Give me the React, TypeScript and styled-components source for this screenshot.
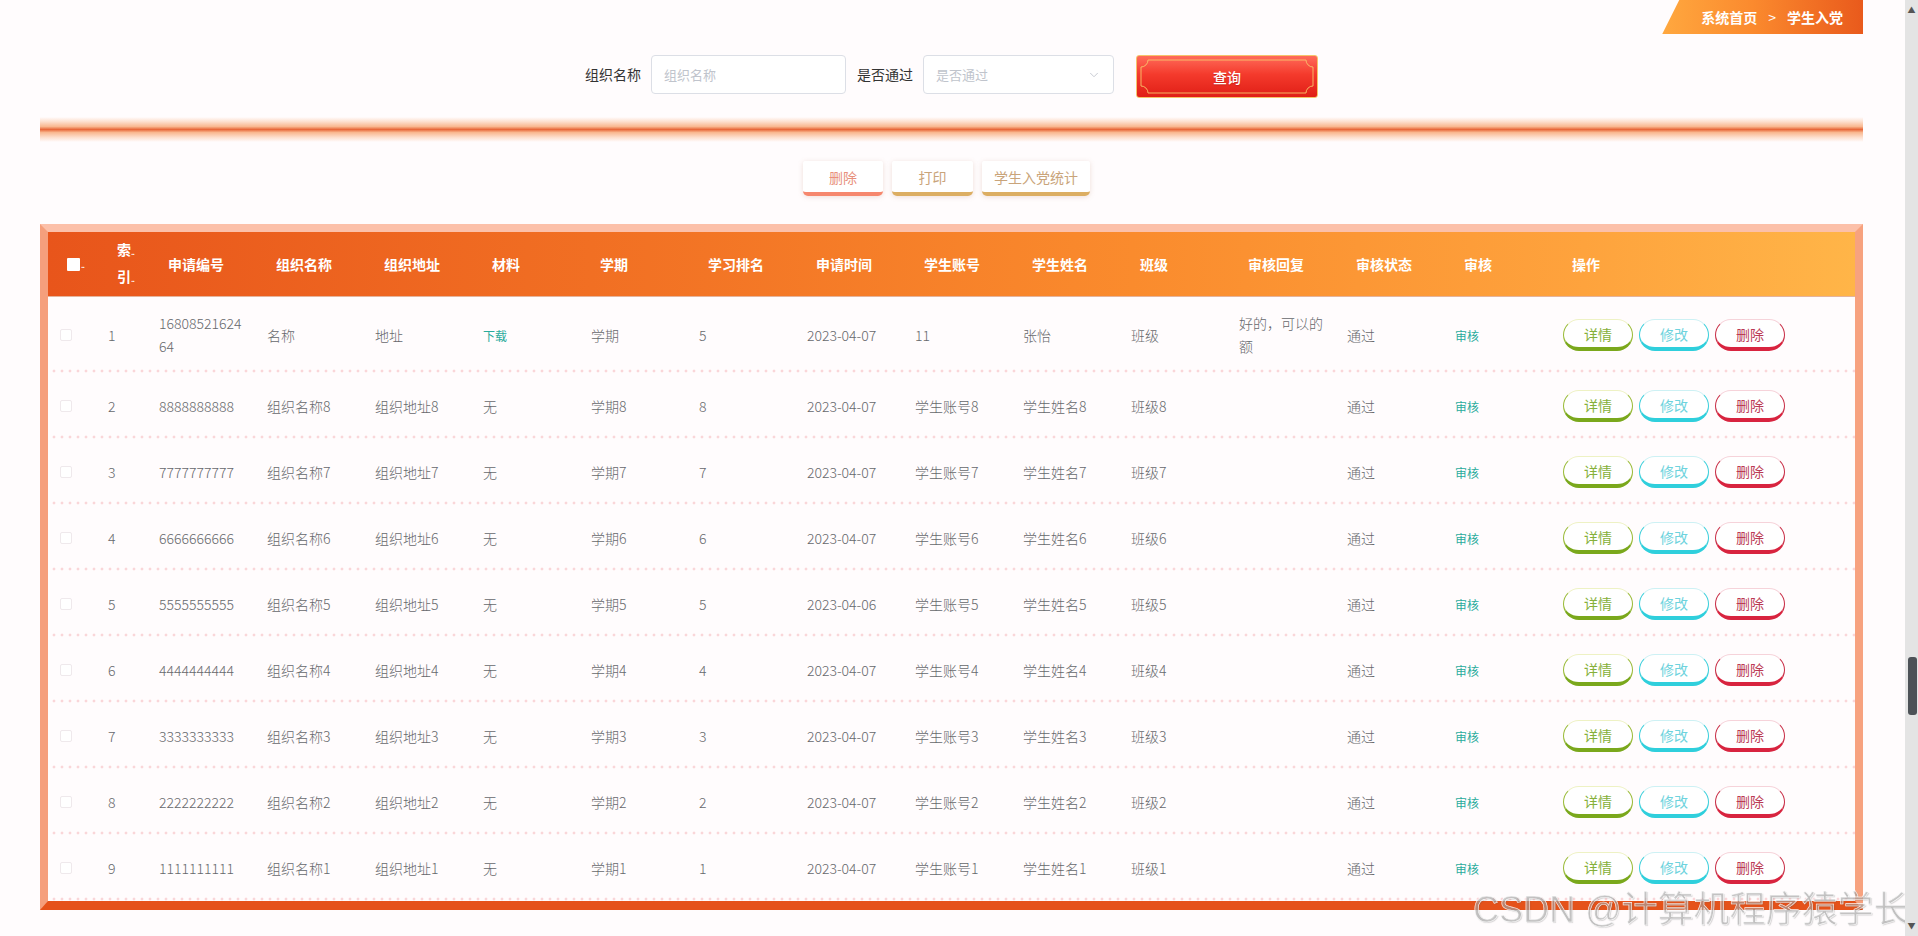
import styled, { createGlobalStyle } from "styled-components";
import { ChevronDown } from "lucide-react";

const GlobalStyle = createGlobalStyle`
  body {
    margin: 0;
    background: #fffcfd;
    font-family: "Noto Sans CJK SC", "Noto Sans", sans-serif;
    color: #606266;
  }
  * {
    box-sizing: border-box;
  }
`;

const Page = styled.div`
  padding: 0 55px 24px 40px;
  display: flex;
  flex-direction: column;
`;

const TopBar = styled.div`
  display: flex;
  justify-content: flex-end;
  height: 34px;
`;

const Breadcrumb = styled.div`
  display: flex;
  align-items: center;
  height: 34px;
  padding: 0 20px 0 39px;
  clip-path: polygon(17px 0, 100% 0, 100% 100%, 0 100%);
  background: linear-gradient(90deg, #ffa83f 0%, #fb8a2e 45%, #e95a1c 100%);
  color: #fff;
  font-size: 14px;
  font-weight: 700;
`;

const Crumb = styled.span`
  white-space: nowrap;
`;

const CrumbSep = styled.span`
  margin: 0 11px;
  font-weight: 400;
`;

const SearchForm = styled.div`
  display: flex;
  justify-content: center;
  align-items: flex-start;
  margin-top: 21px;
  height: 43px;
`;

const FieldLabel = styled.label`
  font-size: 14px;
  color: #333;
  line-height: 39px;
  margin-right: 10px;
  white-space: nowrap;
`;

const TextInput = styled.div<{ $width: number; $gap: number }>`
  display: flex;
  align-items: center;
  justify-content: space-between;
  width: ${(p) => p.$width}px;
  height: 39px;
  margin-right: ${(p) => p.$gap}px;
  padding: 0 12px 0 12px;
  border: 1px solid #dcdfe6;
  border-radius: 4px;
  background: #fff;
  color: #c0c4cc;
  font-size: 13px;
`;

const QueryButton = styled.button`
  position: relative;
  width: 182px;
  height: 43px;
  border: 1px solid #f5c46a;
  border-radius: 3px;
  background: linear-gradient(180deg, #ff6b5a 0%, #f43a2c 45%, #e01e16 100%);
  color: #fff;
  font-family: inherit;
  font-size: 14px;
  font-weight: 500;
  cursor: pointer;
  text-shadow: 0 1px 1px rgba(120, 0, 0, 0.3);
`;

const FrameSvg = styled.svg`
  position: absolute;
  inset: 0;
  pointer-events: none;
`;

const GlowLine = styled.div`
  margin-top: 19px;
  height: 25px;
  background: linear-gradient(
    180deg,
    rgba(255, 255, 255, 0) 0%,
    #fde0cf 18%,
    #f9b890 38%,
    #e8683a 50%,
    #f9b890 62%,
    #fde0cf 82%,
    rgba(255, 255, 255, 0) 100%
  );
`;

const ActionBar = styled.div`
  display: flex;
  justify-content: center;
  gap: 9px;
  margin-top: 19px;
  padding-right: 10px;
`;

const ActionButton = styled.button<{ $tone: "red" | "gold"; $width: number }>`
  width: ${(p) => p.$width}px;
  height: 35px;
  border: none;
  border-bottom: 4px solid ${(p) => (p.$tone === "red" ? "#f6876d" : "#dcae62")};
  border-radius: 2px 2px 5px 5px;
  background: #fff;
  box-shadow: 0 1px 5px rgba(190, 140, 110, 0.25);
  color: ${(p) => (p.$tone === "red" ? "#e8907c" : "#c9a47a")};
  font-family: inherit;
  font-size: 14px;
  cursor: pointer;
`;

const TableBox = styled.div`
  margin-top: 28px;
  border-style: solid;
  border-width: 8px 8px 9px 8px;
  border-color: #fcc0a9 #f7a27f #e5521a #f59f7c;
  background: #fffcfd;
`;

const COLUMNS = "50px 51px repeat(13, 108px) 1fr";

const HeadRow = styled.div`
  display: grid;
  grid-template-columns: ${COLUMNS};
  height: 65px;
  background: linear-gradient(90deg, #e8551b 0%, #f16f23 30%, #fa8b2d 60%, #fea33d 85%, #ffb548 100%);
  border-bottom: 1px solid #e4b49c;
`;

const HeadCell = styled.div`
  display: flex;
  align-items: center;
  padding: 0 6px 0 19px;
  color: #fff;
  font-size: 14px;
  font-weight: 700;
  white-space: nowrap;
  overflow: hidden;
`;

const StackedHead = styled.div`
  display: flex;
  flex-direction: column;
  line-height: 24px;
`;

const Dots = styled.span`
  font-size: 9px;
  font-weight: 400;
  letter-spacing: -1px;
`;

const HeadCheck = styled.span`
  display: inline-block;
  width: 13px;
  height: 13px;
  background: #fff;
  border-radius: 1px;
  margin-right: 1px;
`;

const BodyRow = styled.div`
  display: grid;
  grid-template-columns: ${COLUMNS};
  background-image: radial-gradient(circle, #fad6d9 1.2px, transparent 1.7px);
  background-size: 8px 4px;
  background-repeat: repeat-x;
  background-position: 2px 100%;
`;

const Cell = styled.div<{ $pad?: number }>`
  display: flex;
  align-items: center;
  min-height: 66px;
  padding: 15px ${(p) => p.$pad ?? 10}px;
  font-size: 14px;
  font-weight: 300;
  line-height: 23px;
  color: #66686c;
  word-break: break-all;
`;

const RowCheck = styled.span`
  display: inline-block;
  width: 12px;
  height: 12px;
  border: 1px solid #efe9ec;
  border-radius: 2px;
  background: #fff;
`;

const LinkText = styled.span`
  color: #2aab9c;
  font-size: 12px;
  font-weight: 400;
`;

const OpGroup = styled.div`
  display: flex;
  gap: 6px;
`;

const toneMap = {
  green: { side: "#9cbc3c", top: "#eef2c4", bottom: "#7aa81c", text: "#86b03a" },
  cyan: { side: "#3fd0dc", top: "#cdf1f4", bottom: "#2fcfdc", text: "#6ed3dd" },
  red: { side: "#c93149", top: "#f6d3da", bottom: "#d8243f", text: "#bb3a55" },
};

const OpButton = styled.button<{ $tone: keyof typeof toneMap }>`
  width: 70px;
  height: 32px;
  border: 1px solid ${(p) => toneMap[p.$tone].side};
  border-top-color: ${(p) => toneMap[p.$tone].top};
  border-bottom: 4px solid ${(p) => toneMap[p.$tone].bottom};
  border-radius: 16px;
  background: #fff;
  color: ${(p) => toneMap[p.$tone].text};
  font-family: inherit;
  font-size: 14px;
  padding: 0;
  cursor: pointer;
`;

const Watermark = styled.div`
  position: fixed;
  left: 1473px;
  top: 880px;
  font-family: "Liberation Sans", "Noto Sans CJK SC", sans-serif;
  font-size: 36px;
  color: rgba(175, 175, 175, 0.55);
  -webkit-text-stroke: 0.6px rgba(255, 255, 255, 0.9);
  text-shadow: 1px 1px 1px rgba(90, 90, 90, 0.25);
  white-space: nowrap;
  pointer-events: none;
`;

const ScrollTrack = styled.div`
  position: fixed;
  top: 0;
  right: 0;
  width: 13px;
  height: 100vh;
  background: #e4e4e4;
  display: flex;
  flex-direction: column;
  align-items: center;
  justify-content: space-between;
  padding: 6px 0;
  color: #555;
  font-size: 8px;
  line-height: 8px;
`;

const ScrollThumb = styled.div`
  position: absolute;
  right: 1px;
  top: 657px;
  width: 9px;
  height: 58px;
  border-radius: 3px;
  background: #4d5257;
`;

type Row = {
  index: number;
  code: string;
  org: string;
  addr: string;
  material: string;
  term: string;
  rank: number;
  date: string;
  account: string;
  name: string;
  cls: string;
  reply: string;
  status: string;
};

const rows: Row[] = [
  {
    index: 1,
    code: "1680852162464",
    org: "名称",
    addr: "地址",
    material: "下载",
    term: "学期",
    rank: 5,
    date: "2023-04-07",
    account: "11",
    name: "张怡",
    cls: "班级",
    reply: "好的，可以的额",
    status: "通过",
  },
  ...[8, 7, 6, 5, 4, 3, 2, 1].map((n, i) => ({
    index: i + 2,
    code: String(n).repeat(10),
    org: `组织名称${n}`,
    addr: `组织地址${n}`,
    material: "无",
    term: `学期${n}`,
    rank: n,
    date: n === 5 ? "2023-04-06" : "2023-04-07",
    account: `学生账号${n}`,
    name: `学生姓名${n}`,
    cls: `班级${n}`,
    reply: "",
    status: "通过",
  })),
];

const headers = [
  "申请编号",
  "组织名称",
  "组织地址",
  "材料",
  "学期",
  "学习排名",
  "申请时间",
  "学生账号",
  "学生姓名",
  "班级",
  "审核回复",
  "审核状态",
  "审核",
  "操作",
];

const QueryFrame = () => {
  const w = 180;
  const h = 41;
  const i = 4;
  const r = 7;
  const d = `M ${i + r} ${i} H ${w - i - r} A ${r} ${r} 0 0 0 ${w - i} ${i + r} V ${h - i - r} A ${r} ${r} 0 0 0 ${
    w - i - r
  } ${h - i} H ${i + r} A ${r} ${r} 0 0 0 ${i} ${h - i - r} V ${i + r} A ${r} ${r} 0 0 0 ${i + r} ${i} Z`;
  return (
    <FrameSvg width={w} height={h} viewBox={`0 0 ${w} ${h}`}>
      <path d={d} fill="none" stroke="#f8c36c" strokeWidth="1" opacity="0.9" />
    </FrameSvg>
  );
};

const App = () => {
  return (
    <>
      <GlobalStyle />
      <Page>
        <TopBar>
          <Breadcrumb>
            <Crumb>系统首页</Crumb>
            <CrumbSep>&gt;</CrumbSep>
            <Crumb>学生入党</Crumb>
          </Breadcrumb>
        </TopBar>

        <SearchForm>
          <FieldLabel>组织名称</FieldLabel>
          <TextInput $width={195} $gap={11}>组织名称</TextInput>
          <FieldLabel>是否通过</FieldLabel>
          <TextInput $width={191} $gap={22}>
            是否通过
            <ChevronDown size={14} strokeWidth={1.5} color="#c0c4cc" />
          </TextInput>
          <QueryButton>
            <QueryFrame />
            查询
          </QueryButton>
        </SearchForm>

        <GlowLine />

        <ActionBar>
          <ActionButton $tone="red" $width={80}>删除</ActionButton>
          <ActionButton $tone="gold" $width={81}>打印</ActionButton>
          <ActionButton $tone="gold" $width={108}>学生入党统计</ActionButton>
        </ActionBar>

        <TableBox>
          <HeadRow>
            <HeadCell>
              <HeadCheck />
              <Dots>..</Dots>
            </HeadCell>
            <HeadCell>
              <StackedHead>
                <span>
                  索<Dots>..</Dots>
                </span>
                <span>
                  引<Dots>..</Dots>
                </span>
              </StackedHead>
            </HeadCell>
            {headers.map((h) => (
              <HeadCell key={h}>{h}</HeadCell>
            ))}
          </HeadRow>

          {rows.map((r) => (
            <BodyRow key={r.index}>
              <Cell $pad={12}>
                <RowCheck />
              </Cell>
              <Cell>{r.index}</Cell>
              <Cell>{r.code}</Cell>
              <Cell>{r.org}</Cell>
              <Cell>{r.addr}</Cell>
              <Cell>{r.material === "下载" ? <LinkText>下载</LinkText> : r.material}</Cell>
              <Cell>{r.term}</Cell>
              <Cell>{r.rank}</Cell>
              <Cell>{r.date}</Cell>
              <Cell>{r.account}</Cell>
              <Cell>{r.name}</Cell>
              <Cell>{r.cls}</Cell>
              <Cell>{r.reply}</Cell>
              <Cell>{r.status}</Cell>
              <Cell>
                <LinkText>审核</LinkText>
              </Cell>
              <Cell>
                <OpGroup>
                  <OpButton $tone="green">详情</OpButton>
                  <OpButton $tone="cyan">修改</OpButton>
                  <OpButton $tone="red">删除</OpButton>
                </OpGroup>
              </Cell>
            </BodyRow>
          ))}
        </TableBox>
      </Page>
      <Watermark>CSDN @计算机程序猿学长</Watermark>
      <ScrollTrack>
        <span>▲</span>
        <ScrollThumb />
        <span>▼</span>
      </ScrollTrack>
    </>
  );
};

export default App;
